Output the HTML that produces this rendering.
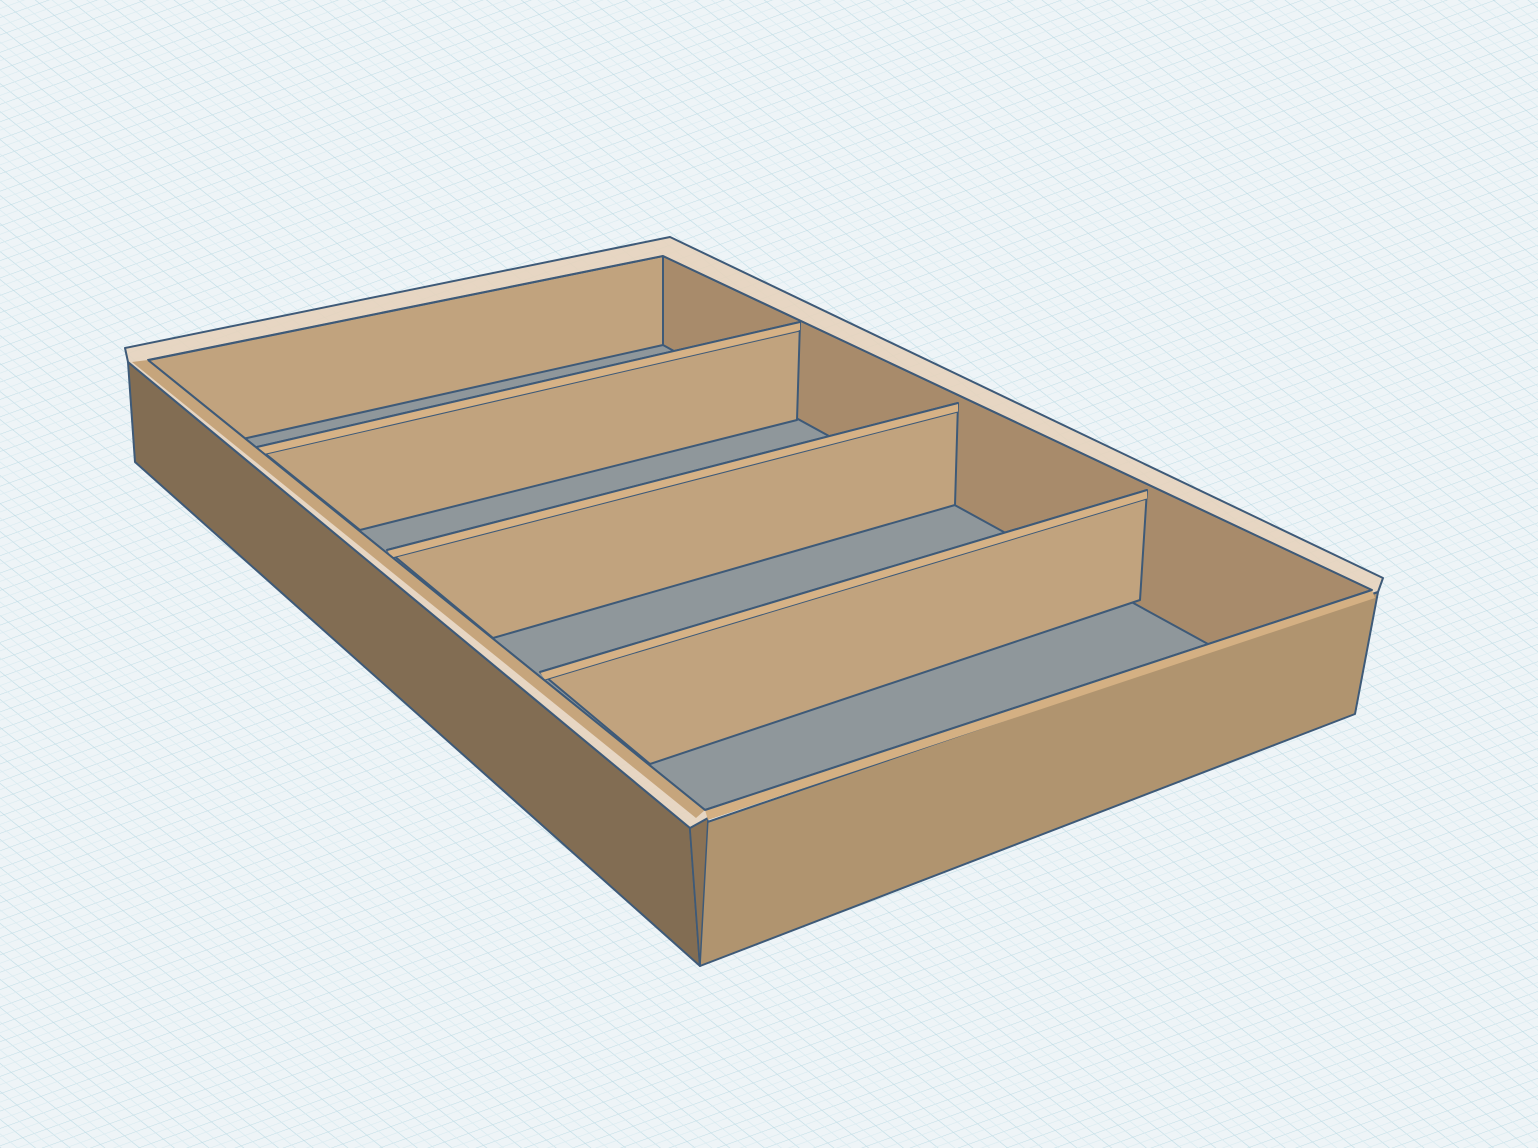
<!DOCTYPE html>
<html><head><meta charset="utf-8"><style>
html,body{margin:0;padding:0;width:1538px;height:1148px;overflow:hidden;background:#eef4f7}
</style></head><body>
<svg width="1538" height="1148" viewBox="0 0 1538 1148" xmlns="http://www.w3.org/2000/svg">
<defs>
<pattern id="g" width="24" height="24" patternUnits="userSpaceOnUse" patternTransform="matrix(1,-0.36,0.62,0.5,0,0)">
<path d="M0 0H24M0 0V24" stroke="#bcdbe4" stroke-width="1.4" fill="none"/>
<path d="M0 12H24M12 0V24" stroke="#d6e9ef" stroke-width="0.8" fill="none"/>
</pattern>
<clipPath id="inner"><polygon points="148,360 663,256 1372,590 705,810"/></clipPath>
</defs>
<rect width="1538" height="1148" fill="#eef4f7"/>
<rect width="1538" height="1148" fill="url(#g)" opacity="0.9"/>
<g stroke="#3e5a78" stroke-width="2" stroke-linejoin="round">
<polygon points="128,362 690,828 700,966 135,462" fill="#826d53"/>
<polygon points="690,828 1378,592 1355,714 700,966" fill="#b0946f"/>
<polygon points="690,828 708,818 700,966" fill="#8a7255" stroke-width="1.5"/>
</g>
<g clip-path="url(#inner)" stroke="#3e5a78" stroke-width="2" stroke-linejoin="round">
<rect width="1538" height="1148" fill="#8f979b" stroke="none"/>
<polygon points="663,256 1372,590 1372,734 663,345" fill="#a88b6b"/>
<polygon points="100,370 663,256 663,345 247,438 100,470" fill="#c1a37e"/>
<!-- divider 1 -->
<polygon points="257,447 800,322 797,420 360,530" fill="#c1a37e"/>
<polygon points="257,447 800,322 800,330 262,455" fill="#d6b286" stroke="none"/>
<line x1="257" y1="447" x2="800" y2="322"/>
<line x1="262" y1="455" x2="800" y2="331" stroke-width="1"/>
<!-- divider 2 -->
<polygon points="387,550 958,403 955,505 493,638" fill="#c1a37e"/>
<polygon points="387,550 958,403 958,412 392,558" fill="#d6b286" stroke="none"/>
<line x1="387" y1="550" x2="958" y2="403"/>
<line x1="392" y1="558" x2="958" y2="412" stroke-width="1"/>
<!-- divider 3 -->
<polygon points="540,672 1147,490 1140,600 650,764" fill="#c1a37e"/>
<polygon points="540,672 1147,490 1147,499 545,680" fill="#d6b286" stroke="none"/>
<line x1="540" y1="672" x2="1147" y2="490"/>
<line x1="545" y1="680" x2="1147" y2="499" stroke-width="1"/>
</g>
<g stroke="#3e5a78" stroke-width="2" stroke-linejoin="round">
<path d="M125,348 L670,237 L1383,578 L1378,592 L708,818 L690,828 L128,362 Z M148,360 L705,810 L1372,590 L663,256 Z" fill="#e6d3bd" fill-rule="evenodd" fill-opacity="0.9"/>
<polygon points="705,810 1372,590 1375,598 708,820" fill="#d4b083" stroke="none"/>
<polygon points="148,360 705,810 696,818 132,362" fill="#c6a57c" stroke="none"/>
<line x1="148" y1="360" x2="705" y2="810"/>
<line x1="705" y1="810" x2="1372" y2="590"/>
<line x1="148" y1="360" x2="663" y2="256" stroke-width="1.5"/>
<line x1="663" y1="256" x2="1372" y2="590" stroke-width="1.5"/>
</g>
</svg>
</body></html>
